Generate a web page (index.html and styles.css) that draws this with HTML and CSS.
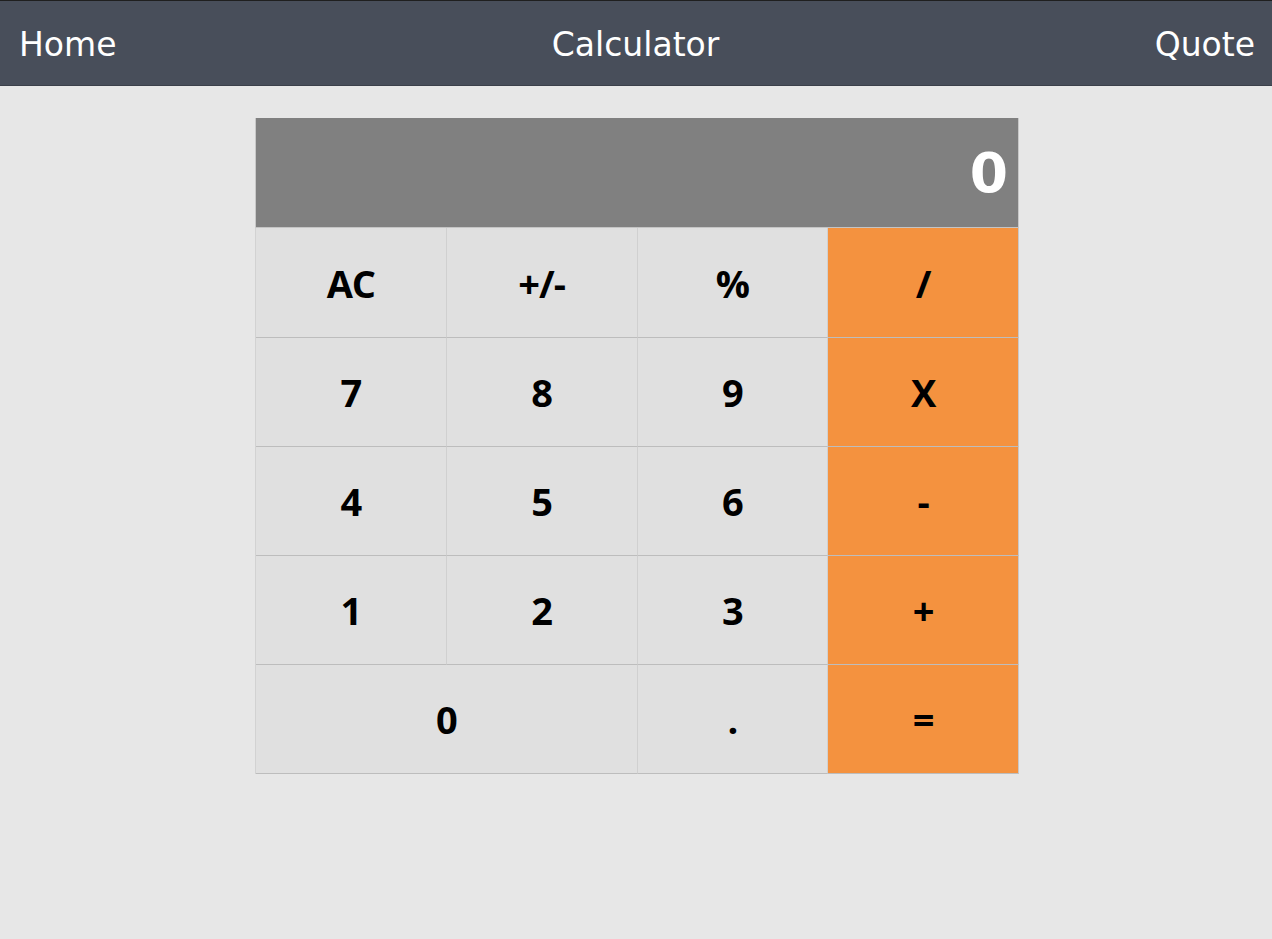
FILE: index.html
```html
<!DOCTYPE html>
<html>
<head>
<meta charset="utf-8">
<link rel="stylesheet" href="styles.css">
<title>Calculator</title>
</head>
<body>
<nav class="nav">
  <a class="nav-link">Home</a>
  <a class="nav-link">Calculator</a>
  <a class="nav-link">Quote</a>
</nav>
<main class="calc">
  <div class="display">0</div>
  <div class="keys">
    <button class="key">AC</button>
    <button class="key">+/-</button>
    <button class="key">%</button>
    <button class="key op">/</button>
    <button class="key">7</button>
    <button class="key">8</button>
    <button class="key">9</button>
    <button class="key op">X</button>
    <button class="key">4</button>
    <button class="key">5</button>
    <button class="key">6</button>
    <button class="key op">-</button>
    <button class="key">1</button>
    <button class="key">2</button>
    <button class="key">3</button>
    <button class="key op">+</button>
    <button class="key zero">0</button>
    <button class="key">.</button>
    <button class="key op">=</button>
  </div>
</main>
</body>
</html>
```
FILE: styles.css
```css
* { box-sizing: border-box; }
html, body { margin: 0; padding: 0; }
body {
  background: #e7e7e7;
  font-family: "DejaVu Sans", sans-serif;
}
.nav {
  height: 86px;
  background: #484e5a;
  border-top: 1px solid #1f1f1f;
  border-bottom: 1px solid #3b404a;
  display: flex;
  align-items: center;
  justify-content: space-between;
  padding: 3px 17px 0 19px;
}
.nav-link {
  color: #ffffff;
  font-size: 33px;
  text-decoration: none;
}
.calc {
  width: 764px;
  margin: 32px auto 0;
  position: relative;
  left: 1px;
}
.display {
  height: 109px;
  background: #808080;
  color: #ffffff;
  font-family: "DejaVu Sans", sans-serif;
  font-weight: bold;
  font-size: 55px;
  display: flex;
  align-items: center;
  justify-content: flex-end;
  padding-right: 10px;
  border-right: 1px solid #c8c8c8;
  border-left: 1px solid #c8c8c8;
}
.keys {
  display: grid;
  grid-template-columns: repeat(4, 1fr);
  grid-template-rows: 110px repeat(4, 109px);
  border-left: 1px solid #d2d2d2;
  border-top: 1px solid #c4c4c4;
}
.key {
  background: #e0e0e0;
  border: 0;
  border-right: 1px solid #d0d0d0;
  border-bottom: 1px solid #bdbdbd;
  font-family: "Open Sans", "Noto Sans", sans-serif;
  font-weight: 700;
  font-size: 38px;
  color: #000;
  padding: 0;
  margin: 0;
  letter-spacing: -1px;
}
.op {
  background: #f4923f;
  border-right: 1px solid #c8c8c8;
}
.zero {
  grid-column: span 2;
}
```
